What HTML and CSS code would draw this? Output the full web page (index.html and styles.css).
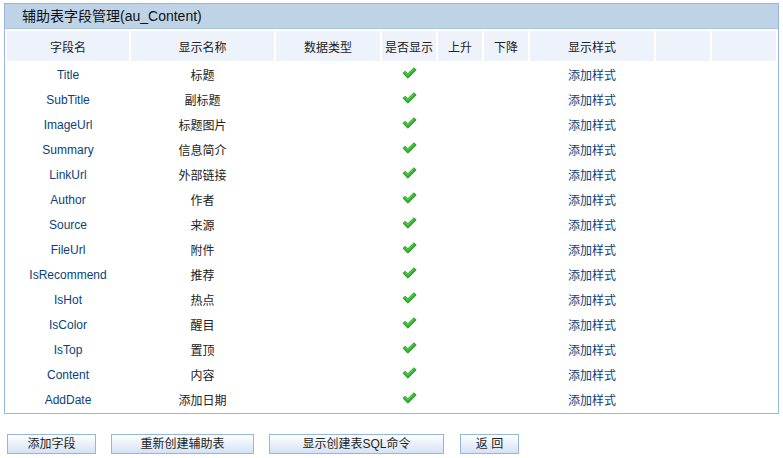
FILE: index.html
```html
<!DOCTYPE html>
<html>
<head>
<meta charset="utf-8">
<link rel="stylesheet" href="styles.css">
</head>
<body>
<div class="panel">
  <div class="panel-title">辅助表字段管理(au_Content)</div>
  <table class="grid">
    <colgroup>
      <col class="c1"><col class="c2"><col class="c3"><col class="c4"><col class="c5"><col class="c6"><col class="c7"><col class="c8"><col class="c9">
    </colgroup>
    <thead>
      <tr><th>字段名</th><th>显示名称</th><th>数据类型</th><th>是否显示</th><th>上升</th><th>下降</th><th>显示样式</th><th></th><th></th></tr>
    </thead>
    <tbody id="rows"></tbody>
  </table>
</div>
<div class="actions">
  <button class="btn w1">添加字段</button>
  <button class="btn w2">重新创建辅助表</button>
  <button class="btn w3">显示创建表SQL命令</button>
  <button class="btn w4">返 回</button>
</div>
<script src="app.js"></script>
</body>
</html>
```
FILE: app.js
```js
var data = [
  ["Title","标题"],["SubTitle","副标题"],["ImageUrl","标题图片"],["Summary","信息简介"],
  ["LinkUrl","外部链接"],["Author","作者"],["Source","来源"],["FileUrl","附件"],
  ["IsRecommend","推荐"],["IsHot","热点"],["IsColor","醒目"],["IsTop","置顶"],
  ["Content","内容"],["AddDate","添加日期"]
];
var check = '<svg class="chk" width="15" height="12" viewBox="0 0 15 12"><path d="M1 6.2 L3.2 4.3 L5.8 6.8 L11.9 0.8 L14.2 2.9 L5.8 11.2 Z" fill="#2fb52a" stroke="#1b8c17" stroke-width="0.8" stroke-linejoin="round"/><path d="M2.4 6.1 L3.3 5.4 L5.8 7.9 L11.9 1.9" fill="none" stroke="#7be070" stroke-width="0.8"/></svg>';
var html = "";
data.forEach(function (r) {
  html += '<tr><td><a class="lnk">' + r[0] + '</a></td><td>' + r[1] + '</td><td></td><td>' + check +
    '</td><td></td><td></td><td><a class="lnk">添加样式</a></td><td></td><td></td></tr>';
});
document.getElementById("rows").innerHTML = html;
```
FILE: styles.css
```css
html, body { margin: 0; padding: 0; background: #fff; }
body {
  padding: 3px 4px 0 4px;
  font-family: "Liberation Sans", "Noto Sans CJK SC", sans-serif;
  font-size: 12px;
  color: #222;
}
.panel {
  width: 773px;
  border: 1px solid #95b7dd;
}
.panel-title {
  height: 24px;
  line-height: 24px;
  background: #bfd3e7;
  border-bottom: 1px solid #a9c4e2;
  padding-left: 17px;
  font-size: 14px;
  color: #111;
}
.grid {
  width: 773px;
  table-layout: fixed;
  border-collapse: separate;
  border-spacing: 2px;
  margin: 0;
}
.c1 { width: 122px; } .c2 { width: 143px; } .c3 { width: 104px; }
.c4 { width: 54px; } .c5 { width: 44px; } .c6 { width: 44px; }
.c7 { width: 124px; } .c8 { width: 54px; } .c9 { width: 64px; }
.grid th {
  height: 30px;
  padding: 0;
  background: #eef3fb;
  font-weight: normal;
  text-align: center;
  color: #222;
}
.grid td {
  height: 23px;
  padding: 0;
  text-align: center;
  vertical-align: middle;
}
.lnk { color: #0a3f7c; text-decoration: none; }
.chk { display: block; margin: -3px auto 0; }
.actions {
  display: flex;
  gap: 15px;
  padding: 20px 0 0 3px;
}
.btn {
  box-sizing: border-box;
  height: 20px;
  padding: 0;
  margin: 0;
  border: 1px solid #95b7dd;
  background: linear-gradient(#ffffff, #d4e2f5);
  font-family: "Liberation Sans", "Noto Sans CJK SC", sans-serif;
  font-size: 12px;
  color: #222;
  line-height: 18px;
}
.w1 { width: 89px; } .w2 { width: 143px; } .w3 { width: 175px; } .w4 { width: 59px; margin-left: 1px; }
```
